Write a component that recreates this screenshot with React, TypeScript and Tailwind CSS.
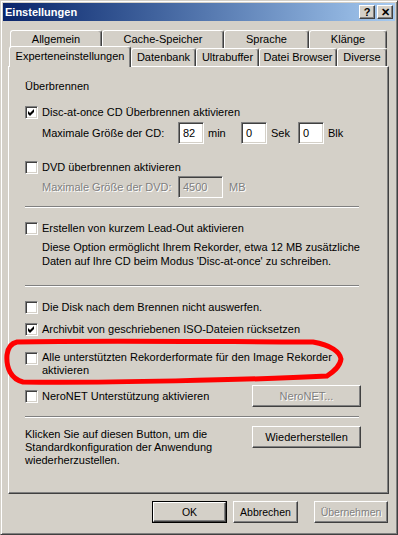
import React from 'react';

const Checkbox: React.FC<{ checked?: boolean }> = ({ checked }) => (
  <span className="w-[13px] h-[13px] shrink-0 bg-white border border-t-[#808080] border-l-[#808080] border-r-white border-b-white shadow-[inset_1px_1px_0_#404040,inset_-1px_-1px_0_#d4d0c8] flex items-center justify-center">
    {checked && (
      <svg width="9" height="9" viewBox="0 0 9 9">
        <path d="M1 3 L3 5 L7 1 L7 4 L3 8 L1 6 Z" fill="#000" />
      </svg>
    )}
  </span>
);

const Field: React.FC<{ value: string; w: string; disabled?: boolean }> = ({ value, w, disabled }) => (
  <span
    className={`${w} h-[22px] shrink-0 border border-t-[#808080] border-l-[#808080] border-r-white border-b-white shadow-[inset_1px_1px_0_#404040,inset_-1px_-1px_0_#d4d0c8] pl-[4px] flex items-center ${
      disabled ? 'bg-[#d4d0c8] text-[#808080] [text-shadow:1px_1px_0_#fff]' : 'bg-white text-black'
    }`}
  >
    {value}
  </span>
);

const Button: React.FC<{ label: string; w: string; disabled?: boolean; isDefault?: boolean }> = ({ label, w, disabled, isDefault }) => (
  <span className={`${w} block h-[22px] shrink-0 ${isDefault ? 'border border-black' : ''}`}>
    <span
      className={`w-full h-full flex items-center justify-center bg-[#d4d0c8] border border-t-white border-l-white border-r-[#404040] border-b-[#404040] shadow-[inset_-1px_-1px_0_#808080] ${
        disabled ? 'text-[#808080] [text-shadow:1px_1px_0_#fff]' : 'text-black'
      }`}
    >
      {label}
    </span>
  </span>
);

const Separator: React.FC = () => (
  <div className="w-[334px] h-[2px] border-t border-t-[#808080] border-b border-b-white" />
);

const Tab: React.FC<{ label: string; w: string; selected?: boolean }> = ({ label, w, selected }) => (
  <div
    className={`${w} shrink-0 flex items-center justify-center bg-[#d4d0c8] rounded-t-[3px] border-t border-l border-t-white border-l-white border-r border-r-[#404040] shadow-[inset_-1px_0_0_#808080] ${
      selected ? 'h-[21px] -mb-[1px] relative z-10 pb-[2px]' : 'h-[18px]'
    }`}
  >
    {label}
  </div>
);

export default function App() {
  return (
    <div className="w-[398px] h-[535px] bg-[#d4d0c8] text-black text-[11px] leading-[13px] font-['Liberation_Sans',Arial,sans-serif] relative border border-t-[#d4d0c8] border-l-[#d4d0c8] border-r-[#404040] border-b-[#404040] shadow-[inset_1px_1px_0_#fff,inset_-1px_-1px_0_#808080] p-[2px] overflow-hidden">
      {/* title bar */}
      <div className="h-[18px] bg-gradient-to-r from-[#0a246a] to-[#a6caf0] flex items-center pl-[2px] pr-[2px]">
        <span className="text-white font-bold text-[11px] flex-1">Einstellungen</span>
        <div className="flex gap-[2px]">
          {['?', '✕'].map((s) => (
            <span
              key={s}
              className="w-[16px] h-[14px] bg-[#d4d0c8] border border-t-white border-l-white border-r-[#404040] border-b-[#404040] shadow-[inset_-1px_-1px_0_#808080] flex items-center justify-center font-bold text-[11px] leading-none"
            >
              {s}
            </span>
          ))}
        </div>
      </div>

      {/* tabs */}
      <div className="mt-[8px] ml-[5px] w-[381px]">
        <div className="flex items-end h-[19px] pl-[2px]">
          <Tab label="Allgemein" w="w-[92px]" />
          <Tab label="Cache-Speicher" w="w-[122px]" />
          <Tab label="Sprache" w="w-[85px]" />
          <Tab label="Klänge" w="w-[78px]" />
        </div>
        <div className="flex items-end h-[18px] pl-[1px]">
          <Tab label="Experteneinstellungen" w="w-[122px]" selected />
          <Tab label="Datenbank" w="w-[65px]" />
          <Tab label="Ultrabuffer" w="w-[63px]" />
          <Tab label="Datei Browser" w="w-[78px]" />
          <Tab label="Diverse" w="w-[50px]" />
        </div>

        {/* panel */}
        <div className="h-[428px] border border-t-white border-l-white border-r-[#404040] border-b-[#404040] shadow-[inset_-1px_-1px_0_#808080] pl-[16px] pt-[12px] flex flex-col">
          <div className="h-[14px] flex items-center">Überbrennen</div>

          <label className="mt-[12px] h-[14px] flex items-center gap-[4px]">
            <Checkbox checked />
            <span>Disc-at-once CD Überbrennen aktivieren</span>
          </label>
          <div className="mt-[3px] h-[22px] flex items-center pl-[17px]">
            <span className="w-[136px]">Maximale Größe der CD:</span>
            <Field value="82" w="w-[26px]" />
            <span className="ml-[4px] w-[33px]">min</span>
            <Field value="0" w="w-[26px]" />
            <span className="ml-[4px] w-[27px]">Sek</span>
            <Field value="0" w="w-[26px]" />
            <span className="ml-[4px]">Blk</span>
          </div>

          <label className="mt-[16px] h-[14px] flex items-center gap-[4px]">
            <Checkbox />
            <span>DVD überbrennen aktivieren</span>
          </label>
          <div className="mt-[2px] h-[22px] flex items-center pl-[17px] text-[#808080] [text-shadow:1px_1px_0_#fff]">
            <span className="w-[136px]">Maximale Größe der DVD:</span>
            <Field value="4500" w="w-[45px]" disabled />
            <span className="ml-[6px]">MB</span>
          </div>

          <div className="mt-[8px]">
            <Separator />
          </div>

          <label className="mt-[13px] h-[14px] flex items-center gap-[4px]">
            <Checkbox />
            <span>Erstellen von kurzem Lead-Out aktivieren</span>
          </label>
          <div className="mt-[5px] pl-[17px] leading-[14px]">
            <div>Diese Option ermöglicht Ihrem Rekorder, etwa 12 MB zusätzliche</div>
            <div>Daten auf Ihre CD beim Modus 'Disc-at-once' zu schreiben.</div>
          </div>

          <div className="mt-[17px]">
            <Separator />
          </div>

          <label className="mt-[13px] h-[14px] flex items-center gap-[4px]">
            <Checkbox />
            <span>Die Disk nach dem Brennen nicht auswerfen.</span>
          </label>
          <label className="mt-[8px] h-[14px] flex items-center gap-[4px]">
            <Checkbox checked />
            <span>Archivbit von geschriebenen ISO-Dateien rücksetzen</span>
          </label>
          <label className="mt-[15px] flex items-start gap-[4px]">
            <span className="pt-[1px]">
              <Checkbox />
            </span>
            <span>
              Alle unterstützten Rekorderformate für den Image Rekorder
              <br />
              aktivieren
            </span>
          </label>

          <div className="mt-[8px] h-[22px] flex items-center">
            <Checkbox />
            <span className="ml-[4px] w-[210px]">NeroNET Unterstützung aktivieren</span>
            <Button label="NeroNET..." w="w-[109px]" disabled />
          </div>

          <div className="mt-[9px]">
            <Separator />
          </div>

          <div className="mt-[8px] flex items-start">
            <div className="w-[227px] pt-[2px]">
              Klicken Sie auf diesen Button, um die
              <br />
              Standardkonfiguration der Anwendung
              <br />
              wiederherzustellen.
            </div>
            <Button label="Wiederherstellen" w="w-[109px]" />
          </div>
        </div>
      </div>

      {/* dialog buttons */}
      <div className="mt-[7px] flex justify-end pr-[7px] text-[10.5px]">
        <Button label="OK" w="w-[75px]" isDefault />
        <span className="ml-[6px]">
          <Button label="Abbrechen" w="w-[65px]" />
        </span>
        <span className="ml-[16px]">
          <Button label="Übernehmen" w="w-[74px]" disabled />
        </span>
      </div>

      {/* red hand-drawn mark */}
      <svg className="absolute left-0 top-0 pointer-events-none" width="398" height="535" viewBox="0 0 398 535">
        <path
          d="M16 341 C 100 339, 240 341, 312 341 C 330 344, 339 351, 340 358 C 339 366, 332 371, 326 375 C 250 379, 100 382, 22 381 C 10 378, 5 367, 6 354 C 7 346, 11 342, 16 341 Z"
          fill="none"
          stroke="#ff0000"
          strokeWidth="5"
        />
      </svg>
    </div>
  );
}
